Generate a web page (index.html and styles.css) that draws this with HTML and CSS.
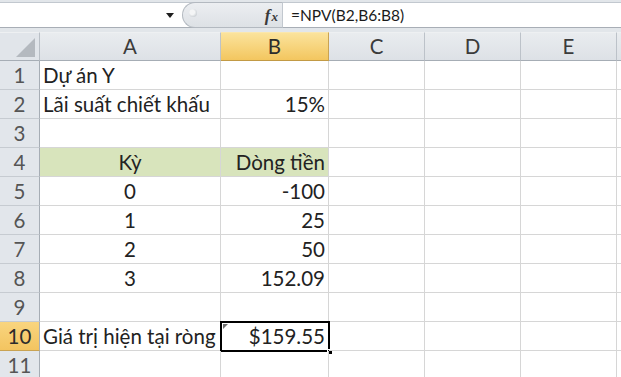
FILE: index.html
```html
<!DOCTYPE html>
<html lang="vi">
<head>
<meta charset="utf-8">
<title>NPV</title>
<link rel="stylesheet" href="styles.css">
</head>
<body>
<div class="topbar">
  <div class="fbar">
    <div class="namebox"><span class="dd"></span></div>
    <div class="pill"><span class="dimple"></span><span class="fx"><i>f</i><i class="x">x</i></span></div>
    <div class="formula">=NPV(B2,B6:B8)</div>
  </div>
</div>
<div class="sheet">
  <div class="corner"><svg width="40" height="28" viewBox="0 0 40 28"><polygon points="16,24 35,24 35,5" fill="#b4b9bf"/></svg></div>
  <div class="ch">A</div>
  <div class="ch selh">B</div>
  <div class="ch">C</div>
  <div class="ch">D</div>
  <div class="ch">E</div>
  <div class="ch last"></div>

  <div class="rh">1</div><div class="c">Dự án Y</div><div class="c"></div><div class="c"></div><div class="c"></div><div class="c"></div><div class="c"></div>
  <div class="rh">2</div><div class="c">Lãi suất chiết khấu</div><div class="c r">15%</div><div class="c"></div><div class="c"></div><div class="c"></div><div class="c"></div>
  <div class="rh">3</div><div class="c"></div><div class="c"></div><div class="c"></div><div class="c"></div><div class="c"></div><div class="c"></div>
  <div class="rh">4</div><div class="c g ctr">Kỳ</div><div class="c g r">Dòng tiền</div><div class="c"></div><div class="c"></div><div class="c"></div><div class="c"></div>
  <div class="rh">5</div><div class="c ctr">0</div><div class="c r">-100</div><div class="c"></div><div class="c"></div><div class="c"></div><div class="c"></div>
  <div class="rh">6</div><div class="c ctr">1</div><div class="c r">25</div><div class="c"></div><div class="c"></div><div class="c"></div><div class="c"></div>
  <div class="rh">7</div><div class="c ctr">2</div><div class="c r">50</div><div class="c"></div><div class="c"></div><div class="c"></div><div class="c"></div>
  <div class="rh">8</div><div class="c ctr">3</div><div class="c r">152.09</div><div class="c"></div><div class="c"></div><div class="c"></div><div class="c"></div>
  <div class="rh">9</div><div class="c"></div><div class="c"></div><div class="c"></div><div class="c"></div><div class="c"></div><div class="c"></div>
  <div class="rh selr">10</div><div class="c">Giá trị hiện tại ròng</div><div class="c r active">$159.55<span class="tri"></span><span class="selbox"></span><span class="handle"></span></div><div class="c"></div><div class="c"></div><div class="c"></div><div class="c"></div>
  <div class="rh">11</div><div class="c"></div><div class="c"></div><div class="c"></div><div class="c"></div><div class="c"></div><div class="c"></div>
</div>
</body>
</html>
```
FILE: styles.css
```css
* { box-sizing: border-box; }
html, body { margin: 0; padding: 0; }
body {
  width: 621px;
  height: 377px;
  overflow: hidden;
  background: #fff;
  font-family: "Lato", "Liberation Sans", sans-serif;
}

.topbar {
  background: #e2e6ea;
  padding: 2px 0 4px;
  height: 32px;
}
.fbar {
  display: flex;
  height: 26px;
  background: #fff;
  border-top: 1px solid #c2c8cf;
  border-bottom: 1px solid #a8aeb6;
}
.namebox {
  width: 182px;
  position: relative;
  background: #fff;
}
.dd {
  position: absolute;
  left: 166px;
  top: 10px;
  width: 0;
  height: 0;
  border-left: 4px solid transparent;
  border-right: 4px solid transparent;
  border-top: 5px solid #1e1e1e;
}
.pill {
  width: 101px;
  margin: -1px 0;
  height: 26px;
  background: linear-gradient(#eceef1, #dde1e5);
  border: 1px solid #b3b9c0;
  border-right: 1px solid #c2c8cf;
  border-radius: 13px 0 0 13px;
  position: relative;
  display: flex;
  align-items: center;
  justify-content: flex-end;
  padding-right: 4px;
}
.dimple {
  position: absolute;
  left: 6px;
  top: 6px;
  width: 8px;
  height: 8px;
  border-radius: 50%;
  background: radial-gradient(circle at 40% 40%, #f4f5f6 0 35%, #c6cbd0 80%);
}
.fx {
  font-family: "Liberation Serif", serif;
  font-style: italic;
  font-weight: bold;
  color: #3a3a3a;
  font-size: 17px;
  line-height: 1;
  margin-top: 1px;
}
.fx i { font-style: italic; }
.fx .x { font-size: 13px; margin-left: 1px; }
.formula {
  flex: 1;
  padding-left: 8px;
  font-size: 15.5px;
  line-height: 24px;
  color: #1a1a1a;
}

.sheet {
  display: grid;
  grid-template-columns: 40px 181px 108px 96px 96px 96px 1fr;
  grid-auto-rows: 29px;
}
.corner {
  background: #e1e5ea;
  border-right: 1px solid #b9bfc6;
  border-bottom: 1px solid #a6adb5;
  border-top: 1px solid #eef0f2;
}
.corner svg { display: block; }
.ch {
  background: linear-gradient(#e9ecef, #dde1e6);
  border-right: 1px solid #bcc2c9;
  border-bottom: 1px solid #a6adb5;
  border-top: 1px solid #eef0f2;
  text-align: center;
  font-size: 20.5px;
  line-height: 27px;
  color: #3b3b3b;
}
.ch.selh {
  background: linear-gradient(#fbe39c, #f3c65f);
  border-right-color: #c9a353;
  border-bottom-color: #c29a45;
  border-top-color: #fbe7ad;
  color: #2c2c2c;
}
.ch.last { border-right: none; }
.rh {
  background: #e2e6eb;
  border-right: 1px solid #a6adb5;
  border-bottom: 1px solid #c6cbd1;
  text-align: center;
  font-size: 20.5px;
  line-height: 28px;
  color: #555;
}
.rh.selr {
  background: linear-gradient(#f9d57f, #f3c460);
  border-bottom-color: #c9a353;
  color: #2c2c2c;
}
.c {
  border-right: 1px solid #d6d6d6;
  border-bottom: 1px solid #d6d6d6;
  font-size: 20.5px;
  line-height: 28px;
  padding: 0 3px;
  white-space: nowrap;
  color: #222;
  position: relative;
}
.c:last-child { border-right: none; }
.r { text-align: right; }
.ctr { text-align: center; }
.g { background: #d8e4bc; }

.active { overflow: visible; }
.selbox {
  position: absolute;
  left: -1px;
  top: -1px;
  right: -2px;
  bottom: -2px;
  border: 2.5px solid #000;
}
.handle {
  position: absolute;
  right: -5px;
  bottom: -5px;
  width: 6px;
  height: 6px;
  background: #000;
  border: 1px solid #fff;
}
.tri {
  position: absolute;
  left: 2px;
  top: 2px;
  width: 0;
  height: 0;
  border-top: 5px solid #6e6e6e;
  border-right: 5px solid transparent;
}
```
